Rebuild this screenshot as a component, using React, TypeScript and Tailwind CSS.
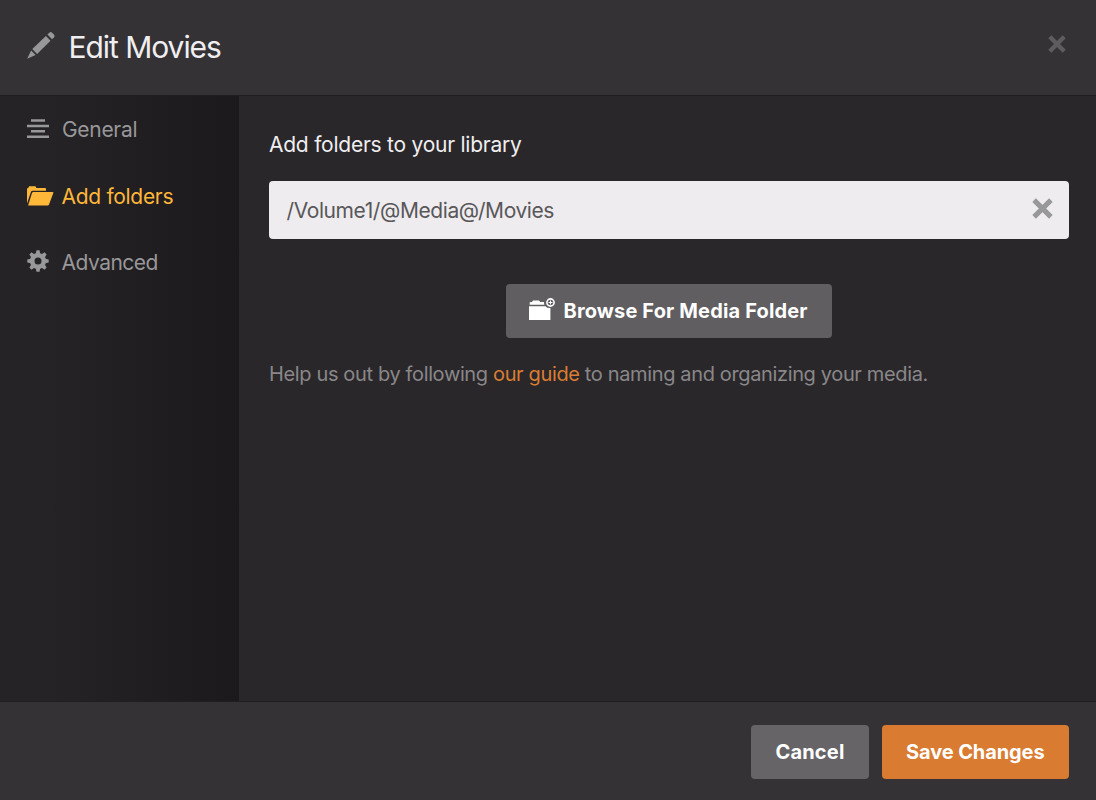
import React from "react";

function PencilIcon() {
  return (
    <svg width="28" height="28" viewBox="0 0 28 28" fill="#989799" className="shrink-0">
      <path d="M20.4 2.6 22.3.8a2 2 0 0 1 2.8 0l1.8 1.8a2 2 0 0 1 0 2.8l-1.9 1.8z" />
      <path d="M18.9 4.1 23.5 8.7 10.1 21.9 5.3 17.1z" />
      <path d="M4.1 18.6 8.6 23 .2 26.8z" />
    </svg>
  );
}

function LinesIcon() {
  return (
    <svg width="22" height="20" viewBox="0 0 22 20" fill="#989799">
      <path d="M4 .3h14v2.5H4zM0 5.7h22v2.5H0zM4 11.1h14v2.5H4zM0 16.5h22v2.5H0z" />
    </svg>
  );
}

function FolderOpenIcon() {
  return (
    <svg width="27" height="20" viewBox="0 0 27 20" fill="#ffb73a">
      <path d="M0 17.5V2.6L1.3 2 2 .3h6.5l.9 1.7H18q1 0 1 1v1.7H5.6q-1.2 0-1.6 1z" />
      <path d="M6.4 5.9h19.2q1.1 0 .7 1.1L22 18.4q-.4 1-1.4 1H1.1L5 7q.4-1.1 1.4-1.1z" />
    </svg>
  );
}

const teeth = [0, 45, 90, 135, 180, 225, 270, 315];

function GearIcon() {
  return (
    <svg width="22" height="22" viewBox="-11 -11 22 22" fill="#989799">
      <circle r="5.8" fill="none" stroke="#989799" strokeWidth="4.6" />
      {teeth.map((a) => (
        <path key={a} d="M-2.3-7 -1.5-10.7H1.5L2.3-7z" transform={`rotate(${a})`} />
      ))}
    </svg>
  );
}

function CrossIcon({ size, color }: { size: number; color: string }) {
  return (
    <svg width={size} height={size} viewBox="0 0 20 20" stroke={color} strokeWidth="4.8">
      <path d="M2 2 18 18M18 2 2 18" />
    </svg>
  );
}

function FolderAddIcon() {
  return (
    <svg width="26" height="23" viewBox="0 0 26 23" fill="#fff">
      <path d="M0 8.2h16.5q1.3 2 4.9 1.9V22H0z" />
      <path d="M.7 6.8V4.3L3 4 4 2.4h6L11.2 4H15q0 1.5.4 2.8z" />
      <circle cx="21.5" cy="4.5" r="3.6" fill="none" stroke="#fff" strokeWidth="1.6" />
      <path d="M21 2.5h1V4h1.5v1H22v1.5h-1V5h-1.5V4H21z" />
    </svg>
  );
}

export default function App() {
  return (
    <div className="flex h-[800px] w-[1096px] flex-col overflow-hidden bg-[#29272a] font-['Inter',sans-serif]">
      <header className="flex h-24 shrink-0 items-start border-b border-[#201e21] bg-[#343235] pl-[27px] pr-[30.5px]">
        <div className="mt-8">
          <PencilIcon />
        </div>
        <h1 className="ml-[13.5px] mt-[27px] whitespace-nowrap text-[30px] leading-10 tracking-[-1.05px] text-[#f0eef0]">
          Edit Movies
        </h1>
        <button aria-label="Close" className="ml-auto mt-[35px]">
          <CrossIcon size={18} color="#5e5c5f" />
        </button>
      </header>

      <div className="flex min-h-0 flex-1">
        <nav className="flex w-[239px] shrink-0 flex-col bg-linear-to-r from-[#252326] from-20% to-[#1b191c] text-[21px] leading-8 text-[#989799]">
          <a className="flex h-[67px] pl-[27px] pt-[18px]">
            <span className="mt-[5px] w-[35px]"><LinesIcon /></span>
            <span className="tracking-[-0.3px]">General</span>
          </a>
          <a className="flex h-[66px] pl-[27px] pt-[18px] text-[#ffb73a]">
            <span className="mt-[5px] w-[34.5px]"><FolderOpenIcon /></span>
            <span className="tracking-[-0.3px]">Add folders</span>
          </a>
          <a className="flex h-[66px] pl-[27px] pt-[18px]">
            <span className="mt-[3px] w-[34.5px]"><GearIcon /></span>
            <span className="tracking-[-0.5px]">Advanced</span>
          </a>
        </nav>

        <main className="flex min-w-0 flex-1 flex-col pl-[30px] pr-[27px]">
          <h2 className="mt-[33px] whitespace-nowrap text-[21px] leading-8 tracking-[-0.24px] text-[#f0eef0]">
            Add folders to your library
          </h2>
          <div className="mt-5 flex h-[57.5px] items-center rounded bg-[#eeecef] pl-[17.5px] pr-4">
            <span className="mt-[3px] whitespace-nowrap text-[21px] leading-8 tracking-[-0.4px] text-[#59575a]">
              /Volume1/@Media@/Movies
            </span>
            <button aria-label="Remove" className="mb-[3px] ml-auto">
              <CrossIcon size={21} color="#989799" />
            </button>
          </div>
          <button className="ml-[236.5px] mt-[45px] flex h-[54.5px] w-[326px] items-center rounded bg-[#605e61] pl-[23px] text-white">
            <span className="mb-[2px]"><FolderAddIcon /></span>
            <span className="ml-[9px] whitespace-nowrap text-[20px] font-bold leading-8 tracking-[0.16px]">
              Browse For Media Folder
            </span>
          </button>
          <p className="mt-5 whitespace-nowrap text-[20px] leading-8 tracking-[-0.36px] text-[#898789]">
            Help us out by following <a className="text-[#da7d32]">our guide</a> to naming and organizing your media.
          </p>
        </main>
      </div>

      <footer className="flex h-[99px] shrink-0 items-start justify-end gap-[12.5px] border-t border-[#201e21] bg-[#343235] pr-[27px] pt-[22.5px]">
        <button className="h-[54.5px] w-[118px] rounded bg-[#666467] text-[20px] font-bold tracking-[0.2px] text-white">
          Cancel
        </button>
        <button className="h-[54.5px] w-[187.5px] rounded bg-[#d97b30] text-[20px] font-bold tracking-[-0.1px] text-white">
          Save Changes
        </button>
      </footer>
    </div>
  );
}
